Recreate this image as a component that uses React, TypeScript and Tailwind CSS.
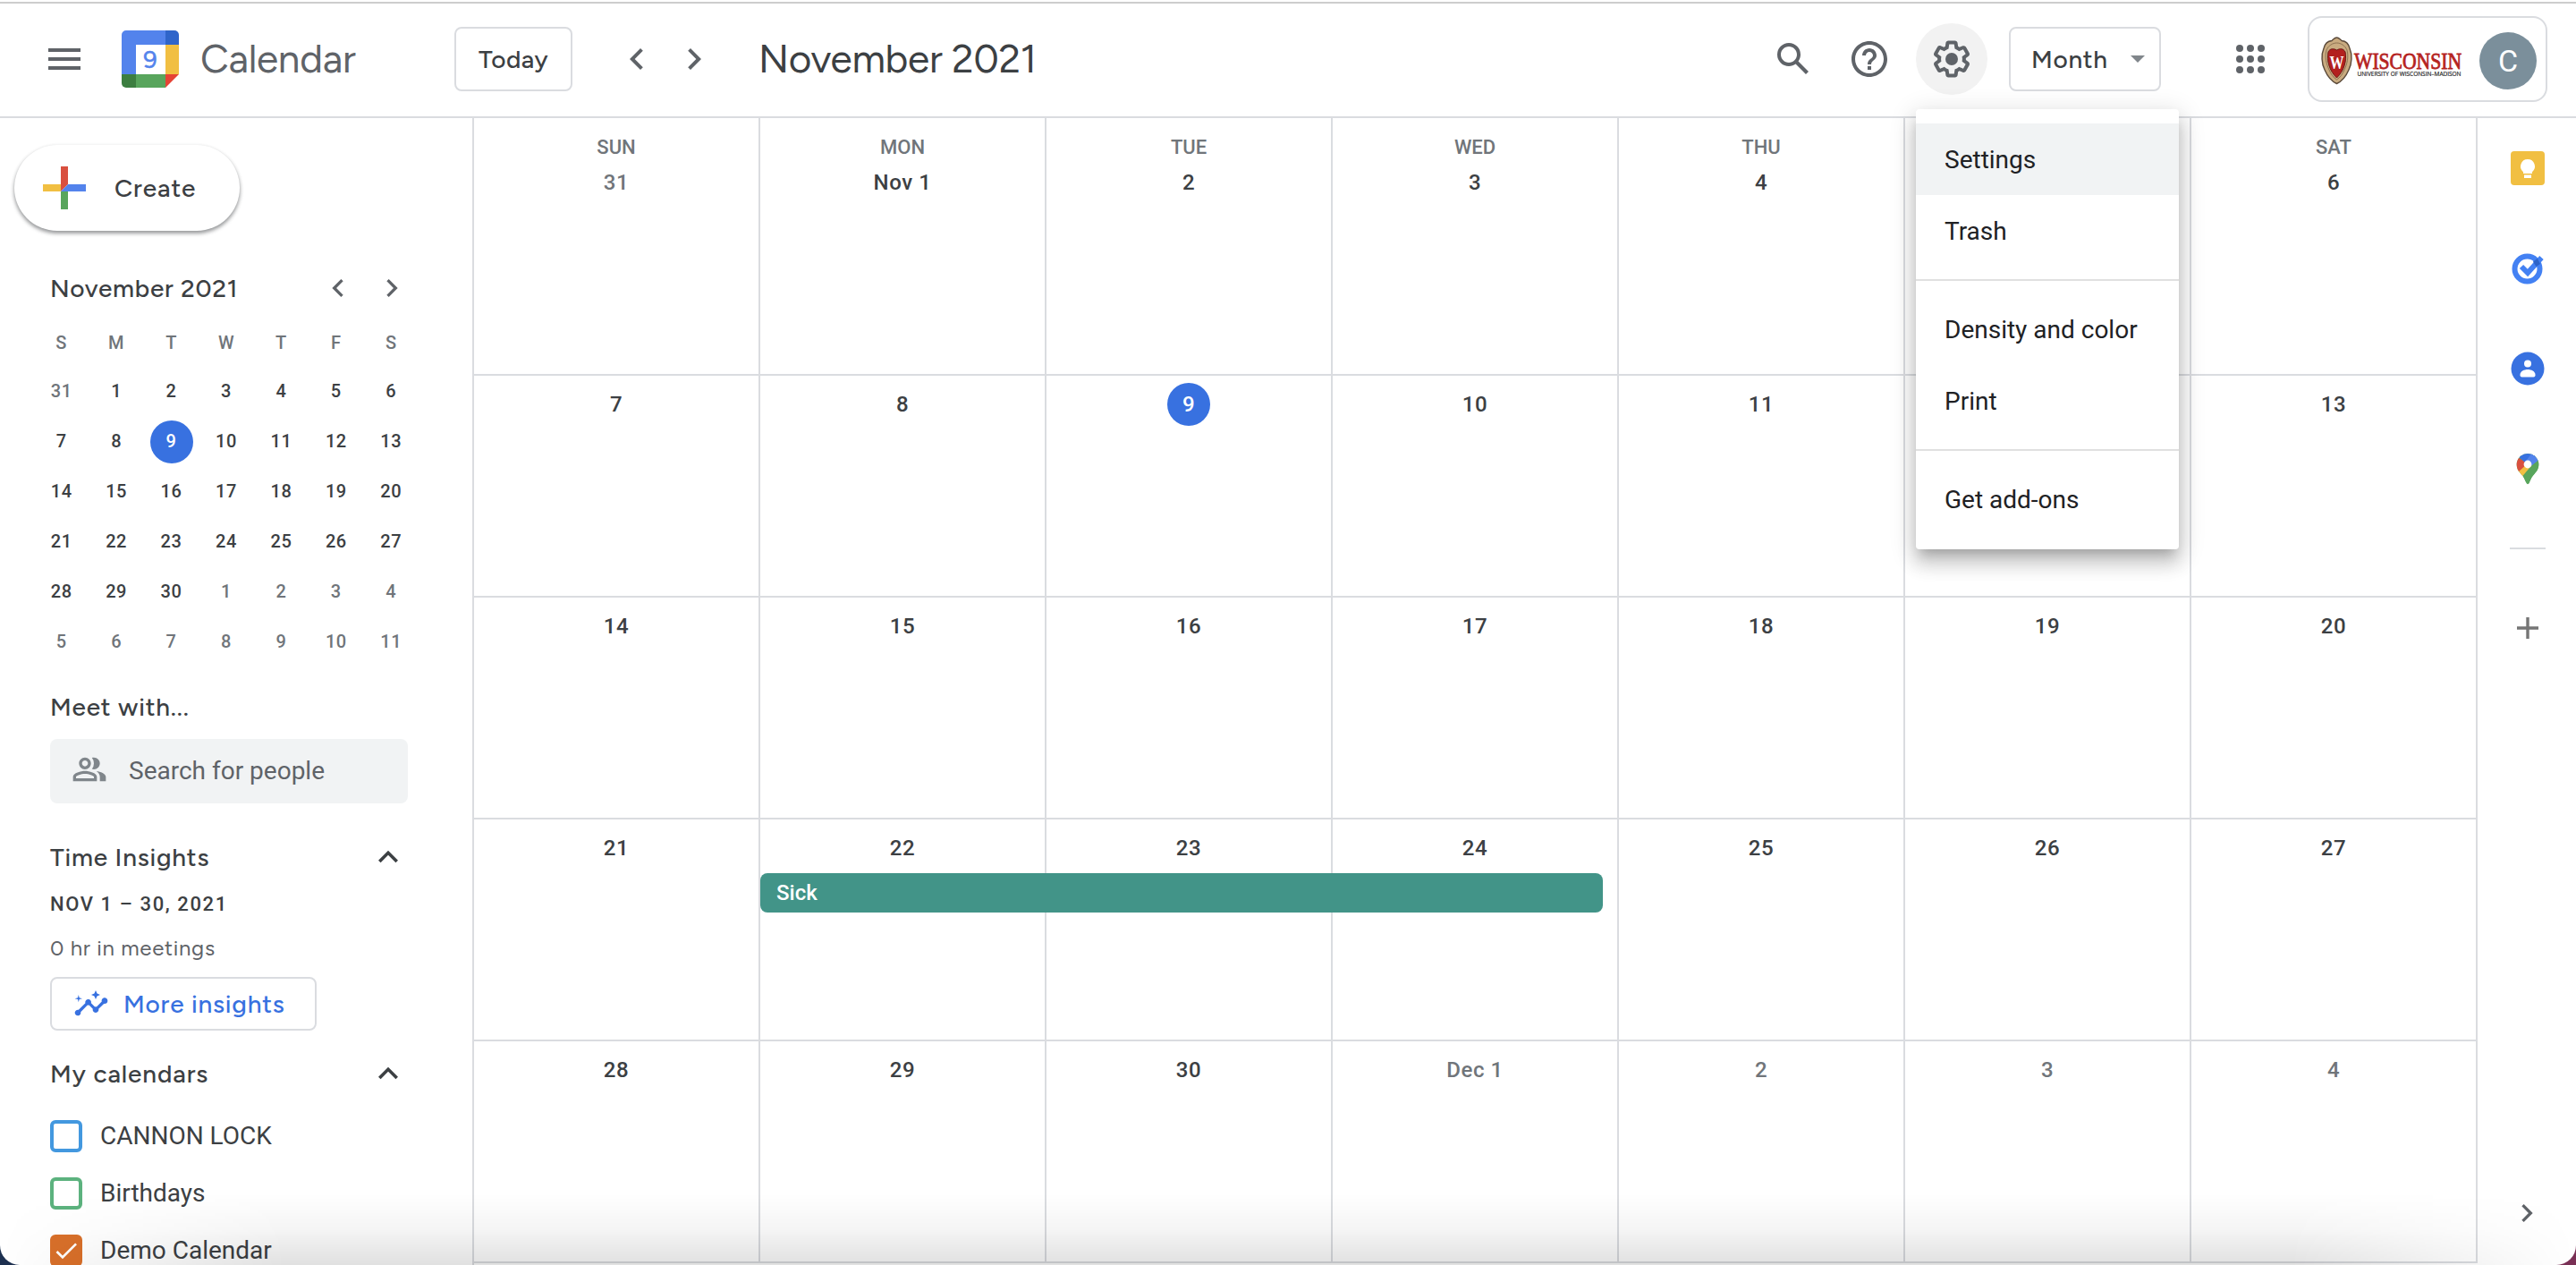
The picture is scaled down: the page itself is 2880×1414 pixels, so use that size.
import React from "react";
import {
  MdMenu,
  MdChevronLeft,
  MdChevronRight,
  MdHelpOutline,
  MdOutlinePeopleAlt,
  MdInsights,
  MdExpandLess,
  MdCheck,
} from "react-icons/md";

const google = "font-['Figtree','Lato',sans-serif]";

function CalendarLogo() {
  return (
    <svg viewBox="0 0 64 64" className="size-16 shrink-0">
      <path d="M5 0H49V16H16V49H0V5A5 5 0 0 1 5 0Z" fill="#5383ec" />
      <path d="M49 0H59A5 5 0 0 1 64 5V16H49Z" fill="#2f65ca" />
      <rect x="49" y="16" width="15" height="33" fill="#f1bf42" />
      <rect x="16" y="16" width="33" height="33" fill="#fff" />
      <path d="M0 49H16V64H5A5 5 0 0 1 0 59Z" fill="#3c7e40" />
      <rect x="16" y="49" width="33" height="15" fill="#58a55c" />
      <path d="M49 49H64L49 64Z" fill="#e54335" />
      <text x="32" y="42" textAnchor="middle" fontSize="27" fontFamily="Figtree, Lato" fill="#5383ec" stroke="#5383ec" strokeWidth="0.6">
        9
      </text>
    </svg>
  );
}

function SearchIcon() {
  return (
    <svg viewBox="0 0 24 24" className="size-12 fill-[#5f6368]">
      <path d="M20.49 19l-5.73-5.73C15.53 12.2 16 10.91 16 9.5A6.5 6.5 0 1 0 9.5 16c1.41 0 2.7-.47 3.77-1.24L19 20.49 20.49 19zM5 9.5C5 7.01 7.01 5 9.5 5S14 7.01 14 9.5 11.99 14 9.5 14 5 11.99 5 9.5z" />
    </svg>
  );
}

function GearIcon() {
  return (
    <svg viewBox="0 0 24 24" className="size-12 fill-[#5f6368]">
      <path d="M13.85 22.25h-3.7c-.74 0-1.36-.54-1.45-1.27l-.27-1.89c-.27-.14-.53-.29-.79-.46l-1.8.72c-.7.26-1.47-.03-1.81-.65L2.2 15.53c-.35-.66-.2-1.44.36-1.88l1.53-1.19c-.01-.15-.02-.3-.02-.46 0-.15.01-.31.02-.46l-1.52-1.19c-.59-.45-.74-1.26-.37-1.88l1.85-3.19c.34-.62 1.11-.9 1.79-.63l1.81.73c.26-.17.52-.32.78-.46l.27-1.91c.09-.7.71-1.25 1.44-1.25h3.7c.74 0 1.36.54 1.45 1.27l.27 1.89c.27.14.53.29.79.46l1.8-.72c.71-.26 1.48.03 1.82.65l1.84 3.18c.36.66.2 1.44-.36 1.88l-1.52 1.19c.01.15.02.3.02.46s-.01.31-.02.46l1.52 1.19c.56.45.72 1.23.37 1.86l-1.86 3.22c-.34.62-1.11.9-1.8.63l-1.8-.72c-.26.17-.52.32-.78.46l-.27 1.91c-.1.68-.72 1.22-1.46 1.22zm-3.23-2h2.76l.37-2.55.53-.22c.44-.18.88-.44 1.34-.78l.45-.34 2.38.96 1.38-2.4-2.03-1.58.07-.56c.03-.26.06-.51.06-.78s-.03-.53-.06-.78l-.07-.56 2.03-1.58-1.39-2.4-2.39.96-.45-.35c-.42-.32-.87-.58-1.33-.77l-.52-.22-.37-2.55h-2.76l-.37 2.55-.53.21c-.44.19-.88.44-1.34.79l-.45.33-2.38-.95-1.39 2.39 2.03 1.58-.07.56a7 7 0 0 0-.06.79c0 .26.02.53.06.78l.07.56-2.03 1.58 1.38 2.4 2.39-.96.45.35c.43.33.86.58 1.33.77l.53.22.38 2.55z" />
      <circle cx="12" cy="12" r="3.5" />
    </svg>
  );
}

function AppsIcon() {
  const spots = [6, 12, 18];
  return (
    <svg viewBox="0 0 24 24" className="size-12 fill-[#5f6368]">
      {spots.map((y) => spots.map((x) => <circle key={`${x}-${y}`} cx={x} cy={y} r="2" />))}
    </svg>
  );
}

function WisconsinLogo() {
  return (
    <svg viewBox="0 0 158 54" className="h-[54px] w-[158px] overflow-visible">
      <path
        d="M16.500 1C19 1 20 3 22 4.500C28 5 30 9 31 13C34 20 33.500 30 30 37C27 44 22 50 16.500 52.500C11 50 6 44 3 37C-.5 30-1 20 2 13C3 9 5 5 11 4.500C13 3 14 1 16.500 1Z"
        fill="#c9ab80"
        stroke="#5b4a3a"
        strokeWidth="1.400"
      />
      <path d="M16.500 7C21 7 26 10 28 15C30 23 28 31 25 37C23 42 20 46 16.500 48C13 46 10 42 8 37C5 31 3 23 5 15C7 10 12 7 16.500 7Z" fill="none" stroke="#8d7353" strokeWidth="1" />
      <path d="M16.500 15C20 13 24 13 26 17C28 26 25 38 16.500 46C8 38 5 26 7 17C9 13 13 13 16.500 15Z" fill="#b3201f" stroke="#6b1a17" strokeWidth="1" />
      <text x="16.500" y="36" textAnchor="middle" fontSize="22" fontWeight="700" fontFamily="Liberation Serif" fill="#fff" textLength="16" lengthAdjust="spacingAndGlyphs">
        W
      </text>
      <text x="36" y="35.500" fontSize="25" fontFamily="Liberation Serif" fill="#b5231f" stroke="#b5231f" strokeWidth="0.800" textLength="120" lengthAdjust="spacingAndGlyphs">
        WISCONSIN
      </text>
      <text x="39.500" y="43.500" fontSize="7.600" fontFamily="Open Sans" fill="#222" stroke="#222" strokeWidth="0.200" textLength="116" lengthAdjust="spacingAndGlyphs">
        UNIVERSITY OF WISCONSIN–MADISON
      </text>
    </svg>
  );
}

function Header() {
  return (
    <header className="mt-[2px] flex h-[130px] shrink-0 items-center border-y-2 border-t-[#cdcdcd] border-b-[#dadce0] pr-8 pb-[2px] pl-12">
      <div className="flex w-[460px] items-center">
        <MdMenu className="size-12 text-[#5f6368]" />
        <div className="ml-10 flex items-center gap-6">
          <CalendarLogo />
          <span className={`${google} text-[44px] leading-none tracking-[-0.25px] text-[#5f6368]`}>Calendar</span>
        </div>
      </div>
      <button className={`${google} flex h-[72px] w-[132px] items-center justify-center rounded-lg border-2 border-[#dadce0] text-[28px] font-medium tracking-[0.4px] text-[#3c4043]`}>
        Today
      </button>
      <div className="ml-12 flex gap-4 text-[#5f6368]">
        <MdChevronLeft className="size-12" />
        <MdChevronRight className="size-12" />
      </div>
      <h1 className={`${google} ml-12 text-[44px] leading-none tracking-[-0.25px] text-[#3c4043]`}>November 2021</h1>
      <div className="ml-auto flex items-center">
        <SearchIcon />
        <MdHelpOutline className="ml-[37px] size-12 text-[#5f6368]" />
        <div className="ml-7 flex size-20 items-center justify-center rounded-full bg-[#f2f2f2]">
          <GearIcon />
        </div>
        <button className={`${google} ml-6 flex h-[72px] w-[170px] items-center rounded-lg border-2 border-[#dadce0] pl-[23px] text-[28px] font-medium tracking-[0.7px] text-[#3c4043]`}>
          <span className="w-[111px] text-left">Month</span>
          <svg viewBox="0 0 16 8" className="h-2 w-4 fill-[#80868b]">
            <path d="M0 0H16L8 8Z" />
          </svg>
        </button>
        <div className="ml-[76px]">
          <AppsIcon />
        </div>
        <div className="ml-10 flex h-24 w-[268px] items-center gap-[18px] rounded-2xl border-2 border-[#dadce0] pt-[4px] pl-[14px]">
          <WisconsinLogo />
          <div className="flex size-16 items-center justify-center rounded-full bg-[#7b8f9b] font-[Roboto,sans-serif] text-[34px] text-white">C</div>
        </div>
      </div>
    </header>
  );
}

const miniWeeks = [
  [31, 1, 2, 3, 4, 5, 6],
  [7, 8, 9, 10, 11, 12, 13],
  [14, 15, 16, 17, 18, 19, 20],
  [21, 22, 23, 24, 25, 26, 27],
  [28, 29, 30, 1, 2, 3, 4],
  [5, 6, 7, 8, 9, 10, 11],
];

function outsideMonth(week: number, day: number) {
  return (week === 0 && day > 20) || (week >= 4 && day < 20);
}

function MiniCalendar() {
  return (
    <section className="mt-10">
      <div className="flex h-12 items-center pl-14">
        <h2 className={`${google} w-[302px] text-[28px] font-medium tracking-[0.7px] text-[#3c4043]`}>November 2021</h2>
        <MdChevronLeft className="size-10 text-[#5f6368]" />
        <MdChevronRight className="ml-5 size-10 text-[#5f6368]" />
      </div>
      <div className="mt-[10px] ml-[38px] grid w-[430px] grid-cols-7 text-[20px] font-medium tracking-[0.6px]">
        {["S", "M", "T", "W", "T", "F", "S"].map((d, i) => (
          <div key={i} className="flex h-[54px] items-center justify-center text-[#70757a]">
            {d}
          </div>
        ))}
        {miniWeeks.map((week, w) =>
          week.map((d) => (
            <div key={`${w}-${d}`} className="flex h-14 items-center justify-center">
              <span
                className={
                  w === 1 && d === 9
                    ? "flex size-12 items-center justify-center rounded-full bg-[#3871e0] pb-0.5 text-white"
                    : outsideMonth(w, d)
                      ? "pb-0.5 text-[#70757a]"
                      : "pb-0.5 text-[#3c4043]"
                }
              >
                {d}
              </span>
            </div>
          )),
        )}
      </div>
    </section>
  );
}

const calendars = [
  { name: "CANNON LOCK", box: "border-[#4398df]", checked: false },
  { name: "Birthdays", box: "border-[#5cb27e]", checked: false },
  { name: "Demo Calendar", box: "border-[#d9702a] bg-[#d9702a]", checked: true },
];

function Sidebar() {
  return (
    <aside className="flex w-[528px] shrink-0 flex-col overflow-hidden">
      <button
        className={`${google} mt-[30px] ml-4 flex h-24 w-[252px] shrink-0 items-center rounded-full bg-white pl-8 text-[28px] font-medium tracking-[0.9px] text-[#3c4043] shadow-[0_2px_4px_rgba(60,64,67,0.302),0_3px_4px_rgba(60,64,67,0.35)]`}
      >
        <svg viewBox="0 0 48 48" className="size-12">
          <path d="M20 0H28V20L20 28Z" fill="#d9503f" />
          <path d="M0 20H20V28H0Z" fill="#f1bf42" />
          <path d="M28 20H48V28H20Z" fill="#5383ec" />
          <path d="M20 28H28V48H20Z" fill="#58a55c" />
        </svg>
        <span className="ml-8">Create</span>
      </button>

      <MiniCalendar />

      <section className="mt-6 pl-14">
        <h2 className={`${google} flex h-10 items-center text-[28px] font-medium tracking-[0.8px] text-[#3c4043]`}>Meet with...</h2>
        <div className="mt-4 flex h-[72px] w-[400px] items-center rounded-lg bg-[#f1f3f4] pl-6">
          <MdOutlinePeopleAlt className="mb-1 size-10 text-[#80868b]" />
          <span className="ml-6 text-[28px] text-[#5f6368]">Search for people</span>
        </div>
      </section>

      <section className="mt-10 pl-14">
        <div className="flex h-10 items-center">
          <h2 className={`${google} w-[356px] text-[28px] font-medium tracking-[0.8px] text-[#3c4043]`}>Time Insights</h2>
          <MdExpandLess className="size-11 text-[#3c4043]" />
        </div>
        <div className="mt-4 flex h-8 items-center text-[22px] font-medium tracking-[1.600px] text-[#3c4043]">NOV 1 – 30, 2021</div>
        <div className={`${google} mt-[18px] flex h-8 items-center text-[24px] tracking-[0.7px] text-[#5f6368]`}>0 hr in meetings</div>
        <button className={`${google} mt-4 flex h-[60px] w-[298px] items-center rounded-lg border-2 border-[#dadce0] pl-6 text-[28px] font-medium tracking-[0.8px] text-[#3871e0]`}>
          <MdInsights className="size-10" />
          <span className="ml-4">More insights</span>
        </button>
      </section>

      <section className="mt-7 pl-14">
        <div className="flex h-10 items-center">
          <h2 className={`${google} w-[356px] text-[28px] font-medium tracking-[0.9px] text-[#3c4043]`}>My calendars</h2>
          <MdExpandLess className="size-11 text-[#3c4043]" />
        </div>
        <div className="mt-[18px]">
          {calendars.map((c) => (
            <div key={c.name} className="flex h-16 items-center">
              <span className={`${c.box} flex size-9 items-center justify-center rounded-md border-4`}>
                {c.checked && <MdCheck className="size-8 shrink-0 text-white" />}
              </span>
              <span className="ml-5 text-[28px] text-[#3c4043]">{c.name}</span>
            </div>
          ))}
        </div>
      </section>
    </aside>
  );
}

const monthWeeks = [
  ["31", "Nov 1", "2", "3", "4", "5", "6"],
  ["7", "8", "9", "10", "11", "12", "13"],
  ["14", "15", "16", "17", "18", "19", "20"],
  ["21", "22", "23", "24", "25", "26", "27"],
  ["28", "29", "30", "Dec 1", "2", "3", "4"],
];
const weekdays = ["SUN", "MON", "TUE", "WED", "THU", "FRI", "SAT"];

function MonthGrid() {
  return (
    <main className="flex w-[2242px] shrink-0 flex-col border-l-2 border-[#dadce0]">
      {monthWeeks.map((week, w) => (
        <div
          key={w}
          className={`${w === 0 ? "h-[288px]" : "h-[248px]"} relative grid shrink-0 grid-cols-7 border-b-2 border-[#dadce0]`}
        >
          {week.map((d, i) => {
            const faded = (w === 0 && i === 0) || (w === 4 && i > 2);
            return (
              <div key={i} className="flex flex-col items-center border-r-2 border-[#dadce0]">
                {w === 0 && (
                  <span className="mt-5 flex h-6 items-center text-[22px] font-medium text-[#70757a]">{weekdays[i]}</span>
                )}
                <span
                  className={`${w === 0 ? "mt-1" : "mt-2"} ${
                    d === "9"
                      ? "w-12 rounded-full bg-[#3871e0] text-white"
                      : faded
                        ? "text-[#70757a]"
                        : "text-[#3c4043]"
                  } flex h-12 items-center justify-center text-[24px] font-medium tracking-[0.6px]`}
                >
                  {d}
                </span>
              </div>
            );
          })}
          {w === 3 && (
            <div className="absolute top-[60px] left-80 flex h-11 w-[942px] items-center rounded-lg bg-[#429488] pl-[18px] text-[24px] font-medium text-white">
              Sick
            </div>
          )}
        </div>
      ))}
    </main>
  );
}

function Rail() {
  return (
    <aside className="flex flex-1 flex-col items-center pt-9 pl-0.5">
      <svg viewBox="0 0 40 40" className="size-10">
        <rect x="1" y="1" width="38" height="38" rx="4" fill="#f1bf42" />
        <path d="M20 10a8 8 0 0 0-5 14.200V26H25V24.200A8 8 0 0 0 20 10Z" fill="#fff" />
        <rect x="16" y="27.500" width="8" height="3.500" fill="#fff" />
      </svg>
      <svg viewBox="0 0 40 40" className="mt-[72px] size-10">
        <circle cx="19.500" cy="20.500" r="14" fill="none" stroke="#4381f3" strokeWidth="6" />
        <path d="M13 18L20 25L35.500 8" fill="none" stroke="#4381f3" strokeWidth="6" />
        <path d="M26 12.500L31 9L34 15L29.500 18Z" fill="#2c63c9" />
      </svg>
      <svg viewBox="0 0 40 40" className="mt-[72px] size-10">
        <circle cx="20" cy="20" r="18.500" fill="#3871e0" />
        <circle cx="20" cy="14.500" r="4" fill="#fff" />
        <path d="M11.500 27C11.500 23 16 21 20 21S28.500 23 28.500 27V27.500A2 2 0 0 1 26.500 29.500H13.500A2 2 0 0 1 11.500 27.500Z" fill="#fff" />
      </svg>
      <svg viewBox="0 0 40 40" className="mt-[72px] size-10">
        <defs>
          <clipPath id="pin">
            <path d="M20 3A12.300 12.300 0 0 0 7.700 15.300C7.700 21 11 24 14 27.500C16.500 30.500 17.500 34 18.500 36C19 37.500 21 37.500 21.500 36C22.500 34 23.500 30.500 26 27.500C29 24 32.300 21 32.300 15.300A12.300 12.300 0 0 0 20 3Z" />
          </clipPath>
        </defs>
        <g clipPath="url(#pin)">
          <rect width="40" height="40" fill="#58a55c" />
          <path d="M6 22L20 8L28 12L11 32Z" fill="#f1bf42" />
          <path d="M4 4L20 14L9 24L4 20Z" fill="#d9503f" />
          <path d="M8 5L16 12L20 15L32 2H10Z" fill="#3871e0" />
          <path d="M36 4L19 24L12 32L28 40L36 20Z" fill="#58a55c" />
          <path d="M25 2L34 9L21 19L16 14Z" fill="#5383ec" />
        </g>
        <circle cx="20" cy="15" r="4.400" fill="#fff" />
      </svg>
      <div className="mt-[68px] h-0.5 w-10 bg-[#dadce0]" />
      <svg viewBox="0 0 24 24" className="mt-[76px] size-6 fill-[#757575]">
        <path d="M10.300 0H13.700V10.300H24V13.700H13.700V24H10.300V13.700H0V10.300H10.300Z" />
      </svg>
      <MdChevronRight className="mt-auto mr-[3px] mb-[38px] size-10 text-[#5f6368]" />
    </aside>
  );
}

const menuGroups = [["Settings", "Trash"], ["Density and color", "Print"], ["Get add-ons"]];

function SettingsMenu() {
  return (
    <div className="absolute top-[122px] left-[2142px] w-[294px] rounded bg-white py-4 shadow-[0_10px_12px_-6px_rgba(0,0,0,0.2),0_16px_20px_2px_rgba(0,0,0,0.14),0_6px_28px_4px_rgba(0,0,0,0.12)]">
      {menuGroups.map((group, g) => (
        <div key={g}>
          {g > 0 && <div className="my-3.5 h-0.5 bg-[#e0e0e0]" />}
          {group.map((item) => (
            <div
              key={item}
              className={`${item === "Settings" ? "bg-[#f1f3f4]" : ""} flex h-20 items-center pt-0.5 pl-8 text-[28px] text-[#202124]`}
            >
              {item}
            </div>
          ))}
        </div>
      ))}
    </div>
  );
}

export default function App() {
  return (
    <div className="h-[1414px] w-[2880px] overflow-hidden bg-linear-to-r from-[#1d3050] to-[#7a3055] font-[Roboto,sans-serif]">
      <div className="relative flex h-full flex-col overflow-hidden rounded-b-[22px] bg-white">
        <Header />
        <div className="flex min-h-0 flex-1">
          <Sidebar />
          <MonthGrid />
          <Rail />
        </div>
        <SettingsMenu />
        <div className="pointer-events-none absolute inset-x-0 bottom-0 h-20 bg-linear-to-t from-black/12 via-black/4 to-transparent mask-x-from-[2560px] mask-x-to-[2880px]" />
      </div>
    </div>
  );
}
